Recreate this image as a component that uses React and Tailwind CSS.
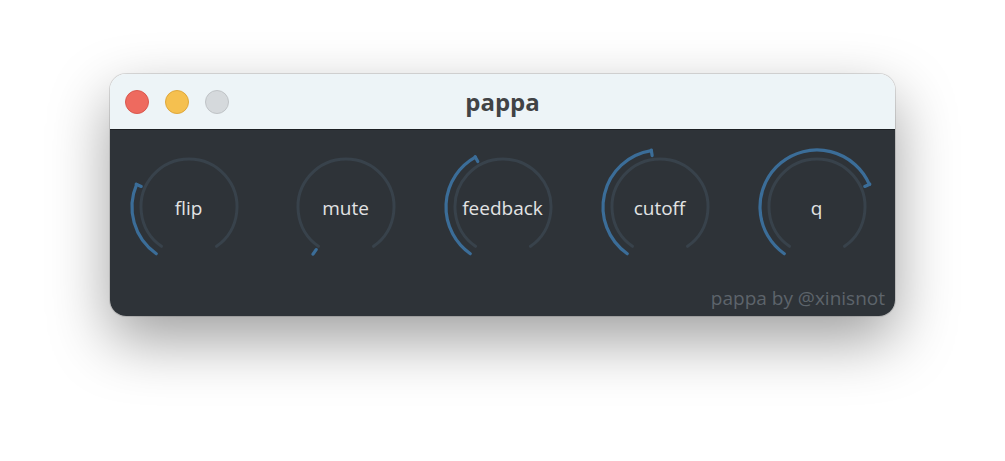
import React from 'react';

const CX = 65;
const CY = 65;
const START = 125;
const SWEEP = 290;

const pt = (r, deg) => {
  const a = (deg * Math.PI) / 180;
  return [CX + r * Math.cos(a), CY + r * Math.sin(a)];
};

const arc = (r, from, to) => {
  const [x1, y1] = pt(r, from);
  const [x2, y2] = pt(r, to);
  const large = to - from > 180 ? 1 : 0;
  return `M ${x1} ${y1} A ${r} ${r} 0 ${large} 1 ${x2} ${y2}`;
};

const knobs = [
  { name: 'flip', value: 0.27 },
  { name: 'mute', value: 0 },
  { name: 'feedback', value: 0.4 },
  { name: 'cutoff', value: 0.47 },
  { name: 'q', value: 0.73 },
];

const Knob = ({ name, value }) => {
  const end = START + SWEEP * value;
  const [tx1, ty1] = pt(52, end);
  const [tx2, ty2] = pt(57.5, end);
  return (
    <div className="relative flex justify-center">
      <svg width="130" height="130" viewBox="0 0 130 130">
        <path d={arc(48, START, START + SWEEP)} fill="none" stroke="#38424b" strokeWidth="3" strokeLinecap="round" />
        {value > 0 && (
          <path d={arc(57, START, end)} fill="none" stroke="#3b6d98" strokeWidth="3.2" strokeLinecap="round" />
        )}
        <line x1={tx1} y1={ty1} x2={tx2} y2={ty2} stroke="#3b6d98" strokeWidth="3.2" strokeLinecap="round" />
      </svg>
      <span className="absolute inset-0 flex items-center justify-center pt-[2px] text-[19px] text-[#e2e3e4]">
        {name}
      </span>
    </div>
  );
};

export default function App() {
  return (
    <div className="w-[1005px] h-[461px] bg-white pt-[74px] px-[110px] font-['Open_Sans',sans-serif]">
      <div className="w-[785px] h-[242px] rounded-[16px] overflow-hidden shadow-[0_24px_60px_rgba(0,0,0,0.38),0_0_0_1px_rgba(0,0,0,0.12)]">
        <div className="relative h-[56px] bg-[#edf4f7] border-b border-[#1c2024] flex items-center justify-center">
          <div className="absolute left-[15px] top-[16px] flex gap-[16px]">
            <span className="w-[24px] h-[24px] rounded-full bg-[#ee6a5f] border border-[#d9584e]" />
            <span className="w-[24px] h-[24px] rounded-full bg-[#f5c04f] border border-[#dea73c]" />
            <span className="w-[24px] h-[24px] rounded-full bg-[#d5d9dc] border border-[#bfc3c6]" />
          </div>
          <span className="text-[24px] font-bold text-[#414345]">pappa</span>
        </div>
        <div className="h-[186px] bg-[#2e3338] pt-[12px] flex flex-col">
          <div className="grid grid-cols-5">
            {knobs.map((k) => (
              <Knob key={k.name} {...k} />
            ))}
          </div>
          <div className="mt-[16px] pr-[10px] text-right text-[19px] leading-[20px] text-[#5d646b]">
            pappa by @xinisnot
          </div>
        </div>
      </div>
    </div>
  );
}
